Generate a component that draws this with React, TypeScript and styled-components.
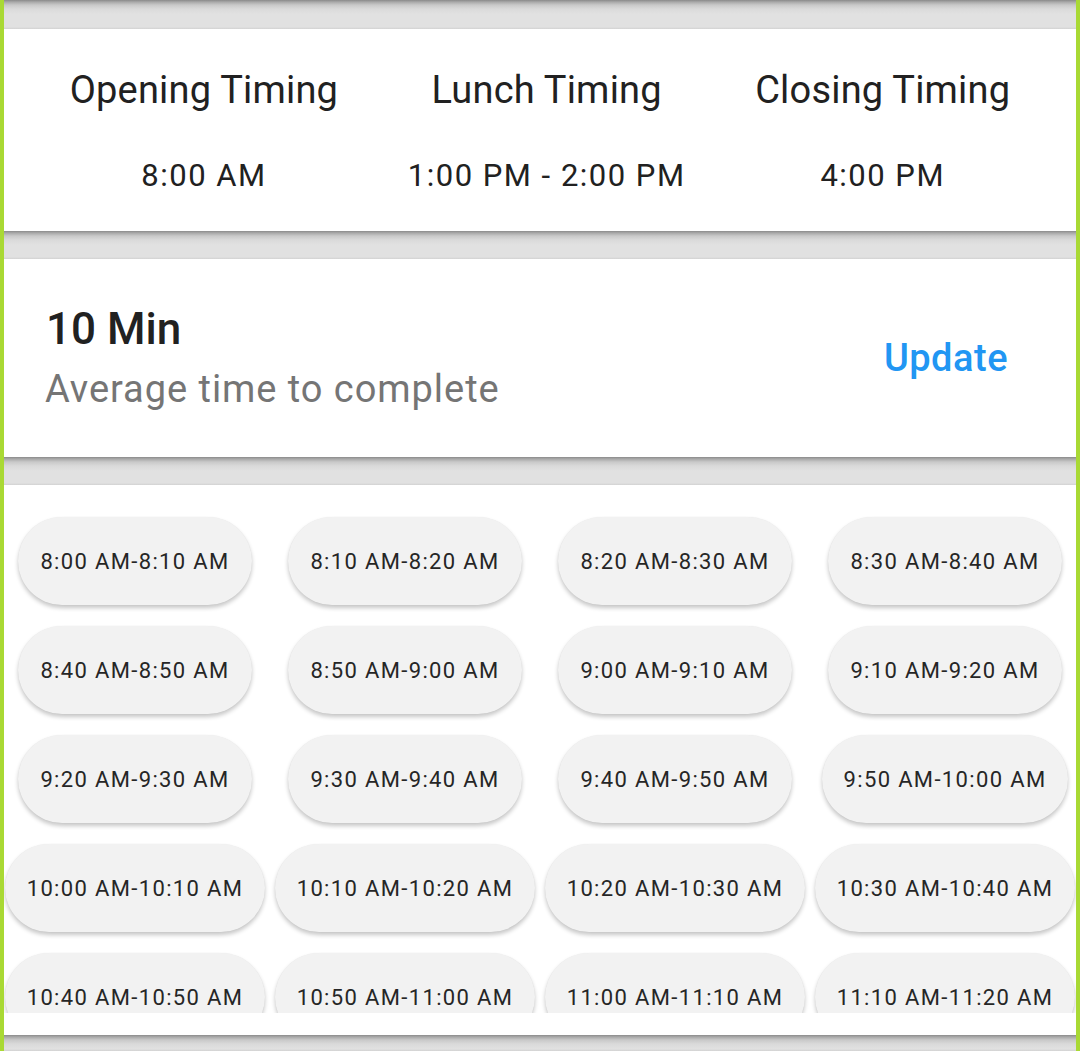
import React from "react";
import styled, { createGlobalStyle } from "styled-components";

const GlobalStyle = createGlobalStyle`
  html, body { margin: 0; padding: 0; }
  body {
    background: #e0e0e0;
    font-family: Roboto, "Noto Sans", "Liberation Sans", sans-serif;
    color: #212121;
    overflow: hidden;
  }
`;

const Frame = styled.div`
  position: relative;
  width: 1080px;
  height: 1051px;
  overflow: hidden;
  display: flex;
  flex-direction: column;
  &::after {
    content: "";
    position: absolute;
    inset: 0;
    border-left: 4px solid #a9d934;
    border-right: 4px solid #a9d934;
    pointer-events: none;
  }
`;

const Band = styled.div<{ $h: number }>`
  height: ${(p) => p.$h}px;
  flex: none;
  background: linear-gradient(
    #8a8a8a 0px,
    #a9a9a9 2px,
    #c9c9c9 5px,
    #dadada 9px,
    #e1e1e1 14px,
    #e1e1e1 calc(100% - 2px),
    #d2d2d2 100%
  );
`;

const Card = styled.section<{ $h: number }>`
  height: ${(p) => p.$h}px;
  flex: none;
  background: #ffffff;
  box-sizing: border-box;
`;

const TimingRow = styled(Card)`
  display: flex;
  justify-content: space-evenly;
  align-items: flex-start;
  padding-top: 39px;
`;

const TimingCol = styled.div`
  display: flex;
  flex-direction: column;
  align-items: center;
  gap: 46px;
`;

const TimingTitle = styled.div`
  font-size: 38px;
  line-height: 44px;
  color: #212121;
  letter-spacing: 0.2px;
`;

const TimingValue = styled.div`
  font-size: 31px;
  line-height: 36px;
  color: #212121;
  letter-spacing: 1.5px;
`;

const AvgCard = styled(Card)`
  display: flex;
  align-items: center;
  justify-content: space-between;
  padding: 0 72px 0 45px;
`;

const AvgInfo = styled.div`
  display: flex;
  flex-direction: column;
  gap: 14px;
`;

const AvgValue = styled.div`
  font-size: 44px;
  font-weight: 500;
  line-height: 48px;
  color: #212121;
  padding-left: 1px;
`;

const AvgLabel = styled.div`
  font-size: 38px;
  line-height: 44px;
  color: #757575;
  letter-spacing: 0.95px;
`;

const UpdateButton = styled.button`
  border: none;
  background: none;
  padding: 0;
  font-family: inherit;
  font-size: 38px;
  font-weight: 500;
  color: #2196f3;
  letter-spacing: 0.5px;
  cursor: pointer;
`;

const SlotsCard = styled(Card)`
  padding: 0 0 22px;
  display: flex;
  flex-direction: column;
`;

const SlotsScroll = styled.div`
  flex: 1;
  overflow: hidden;
  padding-top: 32px;
`;

const SlotGrid = styled.div`
  display: grid;
  grid-template-columns: repeat(4, 1fr);
  row-gap: 21px;
  justify-items: center;
`;

const Slot = styled.div`
  height: 88px;
  min-width: 233px;
  padding: 0 22px;
  box-sizing: border-box;
  border-radius: 44px;
  background: #f2f2f2;
  box-shadow: 0 3px 4px rgba(0, 0, 0, 0.22), 0 0 1px rgba(0, 0, 0, 0.08);
  display: flex;
  align-items: center;
  justify-content: center;
  font-size: 22px;
  letter-spacing: 1.35px;
  color: #262626;
  white-space: nowrap;
`;

const fmt = (mins: number) => {
  const h = Math.floor(mins / 60);
  const m = mins % 60;
  const ap = h >= 12 ? "PM" : "AM";
  const hh = h > 12 ? h - 12 : h;
  return `${hh}:${m.toString().padStart(2, "0")} ${ap}`;
};

const slots = Array.from({ length: 20 }, (_, i) => {
  const start = 8 * 60 + i * 10;
  return `${fmt(start)}-${fmt(start + 10)}`;
});

export default function App() {
  return (
    <>
      <GlobalStyle />
      <Frame>
        <Band $h={29} />
        <TimingRow $h={202}>
          <TimingCol>
            <TimingTitle>Opening Timing</TimingTitle>
            <TimingValue>8:00 AM</TimingValue>
          </TimingCol>
          <TimingCol>
            <TimingTitle>Lunch Timing</TimingTitle>
            <TimingValue>1:00 PM - 2:00 PM</TimingValue>
          </TimingCol>
          <TimingCol>
            <TimingTitle>Closing Timing</TimingTitle>
            <TimingValue>4:00 PM</TimingValue>
          </TimingCol>
        </TimingRow>
        <Band $h={28} />
        <AvgCard $h={198}>
          <AvgInfo>
            <AvgValue>10 Min</AvgValue>
            <AvgLabel>Average time to complete</AvgLabel>
          </AvgInfo>
          <UpdateButton>Update</UpdateButton>
        </AvgCard>
        <Band $h={28} />
        <SlotsCard $h={550}>
          <SlotsScroll>
            <SlotGrid>
              {slots.map((s) => (
                <Slot key={s}>{s}</Slot>
              ))}
            </SlotGrid>
          </SlotsScroll>
        </SlotsCard>
        <Band $h={16} />
      </Frame>
    </>
  );
}
